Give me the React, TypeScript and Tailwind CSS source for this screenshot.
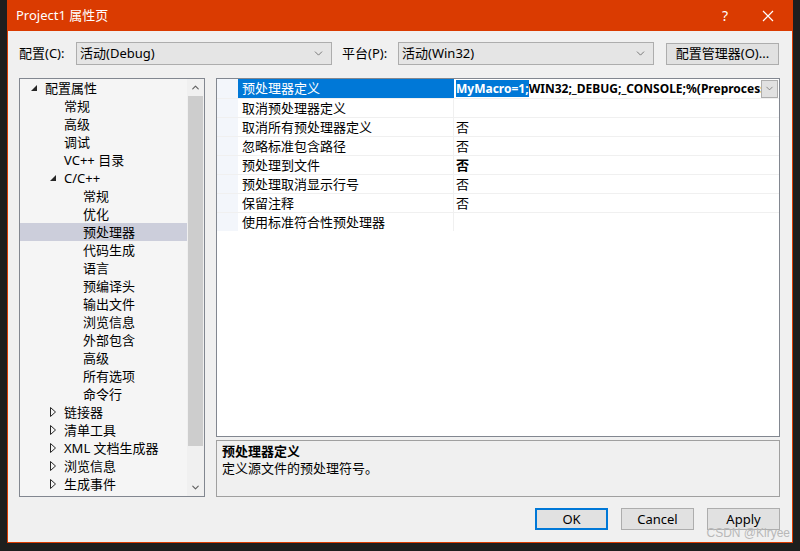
import { ChevronDown, ChevronUp } from "lucide-react";

const font = { fontFamily: '"Noto Sans", "Noto Sans CJK SC", sans-serif' };

type TreeItem = { label: string; level: number; toggle?: "open" | "closed"; selected?: boolean };

const tree: TreeItem[] = [
  { label: "配置属性", level: 0, toggle: "open" },
  { label: "常规", level: 1 },
  { label: "高级", level: 1 },
  { label: "调试", level: 1 },
  { label: "VC++ 目录", level: 1 },
  { label: "C/C++", level: 1, toggle: "open" },
  { label: "常规", level: 2 },
  { label: "优化", level: 2 },
  { label: "预处理器", level: 2, selected: true },
  { label: "代码生成", level: 2 },
  { label: "语言", level: 2 },
  { label: "预编译头", level: 2 },
  { label: "输出文件", level: 2 },
  { label: "浏览信息", level: 2 },
  { label: "外部包含", level: 2 },
  { label: "高级", level: 2 },
  { label: "所有选项", level: 2 },
  { label: "命令行", level: 2 },
  { label: "链接器", level: 1, toggle: "closed" },
  { label: "清单工具", level: 1, toggle: "closed" },
  { label: "XML 文档生成器", level: 1, toggle: "closed" },
  { label: "浏览信息", level: 1, toggle: "closed" },
  { label: "生成事件", level: 1, toggle: "closed" },
];

const props: { name: string; value?: string; bold?: boolean }[] = [
  { name: "取消预处理器定义" },
  { name: "取消所有预处理器定义", value: "否" },
  { name: "忽略标准包含路径", value: "否" },
  { name: "预处理到文件", value: "否", bold: true },
  { name: "预处理取消显示行号", value: "否" },
  { name: "保留注释", value: "否" },
  { name: "使用标准符合性预处理器" },
];

function Toggle({ kind }: { kind?: "open" | "closed" }) {
  if (!kind) return <span className="w-[14px] shrink-0" />;
  return (
    <span className="flex w-[14px] shrink-0 items-center">
      {kind === "open" ? (
        <svg width="6" height="6" viewBox="0 0 6 6">
          <path d="M6 0 L6 6 L0 6 Z" fill="#262626" />
        </svg>
      ) : (
        <svg width="6" height="10" viewBox="0 0 6 10">
          <path d="M0.5 0.5 L5.5 5 L0.5 9.5 Z" fill="none" stroke="#262626" />
        </svg>
      )}
    </span>
  );
}

function Select({ text, width }: { text: string; width: string }) {
  return (
    <div className={`flex h-[23px] shrink-0 items-center justify-between border border-[#adadad] bg-[#e5e5e5] pl-[3px] pr-[6px] ${width}`}>
      <span>{text}</span>
      <ChevronDown className="h-[13px] w-[13px] text-[#606060]" strokeWidth={1.5} />
    </div>
  );
}

function Button({ label, primary }: { label: string; primary?: boolean }) {
  return (
    <div
      className={`flex h-[22px] w-[73px] items-center justify-center bg-[#e1e1e1] ${
        primary ? "border-2 border-[#0078d7]" : "border border-[#adadad]"
      }`}
    >
      {label}
    </div>
  );
}

export default function App() {
  return (
    <div className="relative h-[551px] w-[800px] overflow-hidden bg-[#1e1e1e] px-[7px] pb-[8px] text-[13px] leading-none text-black" style={font}>
      <div className="flex h-full flex-col border-x border-b border-[#da3b01] bg-[#f0f0f0]">
        {/* title bar */}
        <div className="flex h-[31px] items-center justify-between bg-[#da3b01] pl-[8px] pr-[18px] text-white">
          <span className="text-[13px]">Project1 属性页</span>
          <div className="flex items-center gap-[34px]">
            <span className="text-[14px]">?</span>
            <svg width="12" height="12" viewBox="0 0 12 12">
              <path d="M1 1 L11 11 M11 1 L1 11" stroke="white" strokeWidth="1.2" />
            </svg>
          </div>
        </div>

        <div className="flex flex-1 flex-col pl-[11px] pr-[12px]">
          {/* config row */}
          <div className="mt-[11px] flex h-[23px] items-center">
            <span className="w-[57px] shrink-0">配置(C):</span>
            <Select text="活动(Debug)" width="w-[256px]" />
            <span className="ml-[10px] w-[56px] shrink-0">平台(P):</span>
            <Select text="活动(Win32)" width="w-[256px]" />
            <div className="ml-[12px] flex h-[22px] w-[113px] shrink-0 items-center justify-center border border-[#adadad] bg-[#e1e1e1]">
              配置管理器(O)...
            </div>
          </div>

          {/* main */}
          <div className="mt-[13px] flex h-[419px] gap-[11px]">
            {/* tree */}
            <div className="flex w-[186px] shrink-0 border border-[#828790] bg-[#f5f5f5]">
              <div className="min-w-0 flex-1 overflow-hidden">
                {tree.map((t, i) => (
                  <div
                    key={i}
                    className={`flex h-[18px] items-center whitespace-nowrap ${t.selected ? "bg-[#cccedb]" : ""}`}
                    style={{ paddingLeft: 11 + t.level * 19 }}
                  >
                    <Toggle kind={t.toggle} />
                    <span>{t.label}</span>
                  </div>
                ))}
                <div className="h-[18px] pl-[99px] text-[8px] leading-[6px] text-[#555]">..</div>
              </div>
              <div className="flex w-[17px] shrink-0 flex-col items-center bg-[#f0f0f0]">
                <div className="flex h-[17px] items-center justify-center">
                  <ChevronUp className="h-[11px] w-[11px] text-[#606060]" strokeWidth={2.5} />
                </div>
                <div className="h-[350px] w-[15px] bg-[#cdcdcd]" />
                <div className="flex-1" />
                <div className="flex h-[17px] items-center justify-center">
                  <ChevronDown className="h-[11px] w-[11px] text-[#606060]" strokeWidth={2.5} />
                </div>
              </div>
            </div>

            {/* right column */}
            <div className="flex min-w-0 flex-1 flex-col gap-[3px]">
              <div className="flex-1 overflow-hidden border border-[#828790] bg-white">
                {/* selected row */}
                <div className="flex h-[19px]">
                  <div className="w-[21px] shrink-0 bg-[#f3f6fb]" />
                  <div className="flex w-[216px] shrink-0 items-center bg-[#0078d7] pl-[4px] text-white">预处理器定义</div>
                  <div className="flex min-w-0 flex-1 items-center overflow-hidden pl-[2px] text-[12px] font-bold whitespace-nowrap">
                    <span className="flex h-[17px] shrink-0 items-center bg-[#0078d7] text-white">MyMacro=1;</span>
                    <span className="min-w-0 flex-1 overflow-hidden">WIN32;_DEBUG;_CONSOLE;%(PreprocessorDefinitions)</span>
                    <div className="mr-[1px] flex h-[18px] w-[17px] shrink-0 items-center justify-center border border-[#adadad] bg-[#e1e1e1]">
                      <ChevronDown className="h-[11px] w-[11px] text-[#606060]" strokeWidth={1.5} />
                    </div>
                  </div>
                </div>
                {props.map((p, i) => (
                  <div key={i} className="flex h-[19px] border-t border-[#f0f0f0]">
                    <div className="w-[21px] shrink-0 bg-[#f3f6fb]" />
                    <div className="flex w-[216px] shrink-0 items-center border-r border-[#f0f0f0] pl-[4px] whitespace-nowrap">{p.name}</div>
                    <div className={`flex flex-1 items-center pl-[2px] ${p.bold ? "font-bold" : ""}`}>{p.value}</div>
                  </div>
                ))}
              </div>
              <div className="flex h-[57px] shrink-0 flex-col gap-[4px] border border-[#a0a0a0] bg-[#f0f0f0] px-[5px] pt-[4px]">
                <span className="font-bold">预处理器定义</span>
                <span>定义源文件的预处理符号。</span>
              </div>
            </div>
          </div>

          {/* buttons */}
          <div className="mt-[11px] flex justify-end gap-[13px]">
            <Button label="OK" primary />
            <Button label="Cancel" />
            <Button label="Apply" />
          </div>
        </div>
      </div>
      <span className="absolute right-[10px] top-[527px] text-[12px] text-[#b8b8b8]" style={{ fontFamily: '"Liberation Sans", sans-serif' }}>
        CSDN @Kiryee
      </span>
    </div>
  );
}
